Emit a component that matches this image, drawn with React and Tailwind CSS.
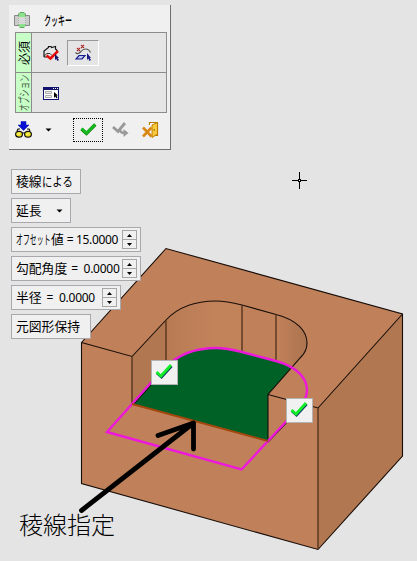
import React from "react";

// Text squeezed horizontally, as the narrow kana of the UI face
function Squeeze({ children, width, scale, className = "" }) {
  return (
    <span className={`inline-block whitespace-nowrap ${width}`}>
      <span className={`inline-block origin-left ${scale} ${className}`}>{children}</span>
    </span>
  );
}

function Model() {
  return (
    <svg className="absolute inset-0" width="417" height="561" viewBox="0 0 417 561" fill="none">
      <defs>
        <linearGradient id="leftBend" x1="165" x2="216" y1="0" y2="0" gradientUnits="userSpaceOnUse">
          <stop offset="0" stopColor="#b67a53" />
          <stop offset="0.6" stopColor="#be8059" />
          <stop offset="1" stopColor="#c2825a" />
        </linearGradient>
        <linearGradient id="rightBend" x1="276" x2="307" y1="0" y2="0" gradientUnits="userSpaceOnUse">
          <stop offset="0" stopColor="#c2825a" />
          <stop offset="1" stopColor="#aa734f" />
        </linearGradient>
      </defs>
      <path d="M81.5 342.5L166 248.5L402.5 314V456L318 549.5L81.5 483.5Z" fill="#c0815a" />
      <path d="M318 408L402.5 314V456L318 549.5Z" fill="#b17750" />
      <path d="M132 356.5L166 320V367L132 404Z" fill="#b17750" />
      <path d="M166 320C179 306 197 301 216 301C226 301 234 303 242 305V352C216 344 186 346 166 367Z" fill="url(#leftBend)" />
      <path d="M276 314.5C298 320 307 332 307 343C307 349 305 353 301 357L291 368L276 361Z" fill="url(#rightBend)" />
      <path d="M132 404L166 367C180 353 197 348 216 348C226 348 234 350 242 352L276 361Q285 364 291.500 367.500L268 394.500V441Z" fill="#006127" />
      <g stroke="#170d08" strokeWidth="1.1">
        <path d="M81.500 342.500L166 248.500L402.500 314V456L318 549.500L81.500 483.500ZM81.500 342.500L132 356.500L166 320C179 306 197 301 216 301C226 301 234 303 242 305L276 314.500C298 320 307 332 307 343C307 349 305 353 301 357L268 394.500L318 408L402.500 314M268 394.500V441" />
        <path d="M132 356.500V404M166 320V367M242 305V352M276 314.500V361M318 408V549" stroke="#56351f" strokeWidth="1.4" />
        <path d="M133 405L152 384M268 442L288 421" />
      </g>
      <path d="M152 381.500L107 432L241.500 469.500L288 419.500M166 367C180 353 197 348 216 348C226 348 234 350 242 352L276 361C298 367 307 379 307 390Q307 396 304.500 400" stroke="#ee18dc" strokeWidth="2.4" />
      <path d="M132 404L268 441" stroke="#a3470d" strokeWidth="2" />
      <path d="M81.500 510.500L193.500 423M158 435.500L193.500 423L193.500 449" stroke="#000" strokeWidth="4.800" strokeLinecap="round" strokeLinejoin="round" />
      <path d="M292 180.500H307M299.500 172V189" stroke="#000" />
      <rect x="298" y="179" width="3" height="3" fill="#000" />
      <rect x="299" y="180" width="1" height="1" fill="#fff" />
    </svg>
  );
}

function CookieIcon() {
  return (
    <svg width="16" height="18" viewBox="0 0 16 18">
      <path d="M4.500 6V3L6 1.500H10L11.500 3V6M4.500 12V14L6 16.500H10L11.500 14V12" fill="#8be28b" stroke="#62a868" />
      <path d="M.5 4.500H15.500V14.500H.5Z" fill="#cbcbcb" stroke="#888" />
      <path d="M5 3H11V7H5ZM5 12H11V16H5Z" fill="#8be28b" />
      <rect x="4" y="6" width="8" height="7" fill="#d8d8d8" />
      <path d="M4.500 5V14M11.500 5V14" stroke="#9ab59a" strokeDasharray="1 1" />
    </svg>
  );
}

function RegionIcon() {
  return (
    <svg width="17" height="17" viewBox="0 0 17 17" fill="none">
      <path d="M1 12V6L5.500 2.500V1.500H8L8.500 2.500L12.500 1.500V4L14.500 6" fill="#e5e5e5" stroke="#151515" strokeWidth="1.200" />
      <path d="M1 11L4 8.500L7 8.500L9 10.500" stroke="#333" />
      <path d="M1 12H4" stroke="#151515" />
      <path d="M3.500 10.500L7.500 13.500L15 6" stroke="#e60b0b" strokeWidth="2.500" />
      <path d="M12 9V15L13.300 14L14.500 16L16 15L14.500 13H16Z" fill="#16166e" />
    </svg>
  );
}

function CurveIcon() {
  return (
    <svg width="17" height="18" viewBox="0 0 17 18" fill="none">
      <path d="M2 4L5 7M5 4L2 7M6 1L9 4M9 1L6 4" stroke="#ac2929" strokeWidth="1.100" />
      <path d="M.5 8.500Q3 11 6 7.500Q8 5 10.500 5Q14 5 15.500 8.500" stroke="#555" strokeWidth="1.200" />
      <path d="M4 11.500H10L7 15H1Z" fill="#b9c8ee" stroke="#18188d" strokeWidth="1.200" />
      <path d="M12 9V16L13.300 14.500L14.500 17L16 16L14.700 14H16Z" fill="#171786" />
    </svg>
  );
}

function DialogIcon() {
  return (
    <svg width="16" height="13" viewBox="0 0 16 13">
      <rect x=".5" y=".5" width="15" height="12" fill="#fff" stroke="#11116e" />
      <path d="M0 0H16V3H0Z" fill="#11116e" />
      <path d="M10 1H11V2H10ZM12 1H13V2H12ZM14 1H15V2H14Z" fill="#fff" />
      <path d="M2.500 4.500H8.500V6.500H2.500ZM2.500 8.500H8.500V10.500H2.500Z" fill="#eee" stroke="#aaa" />
      <path d="M11 5V11L12.300 9.500L13.500 11.500L14.500 10.500L13.500 8.500H15Z" fill="#000" />
    </svg>
  );
}

function PreviewIcon() {
  return (
    <svg width="17" height="17" viewBox="0 0 17 17">
      <path d="M6 .5H11V4H14L8.500 9.500L3 4H6Z" fill="#0710d5" stroke="#0710a5" strokeWidth=".5" />
      <path d="M2 10L3 8H5M12 8H14L15 10M7 12H10" fill="none" stroke="#111" strokeWidth="1.200" />
      <ellipse cx="4" cy="13.200" rx="3.400" ry="2.900" fill="#f1e529" stroke="#111" strokeWidth="1.200" />
      <ellipse cx="13" cy="13.200" rx="3.400" ry="2.900" fill="#f1e529" stroke="#111" strokeWidth="1.200" />
      <path d="M2.500 14L5 11.500M11.500 14L14 11.500" stroke="#fff8a0" />
    </svg>
  );
}

function OkIcon() {
  return (
    <svg width="17" height="13" viewBox="0 0 17 13" fill="none">
      <path d="M1.500 6L6.500 10.500L15.300 1.500" stroke="#078b0d" strokeWidth="3.400" />
      <path d="M1.500 5.500L6.500 10L15 1.500" stroke="#19ba21" strokeWidth="2.400" />
    </svg>
  );
}

function ApplyIcon() {
  return (
    <svg width="17" height="15" viewBox="0 0 17 15" fill="none" stroke="#999">
      <path d="M1 5L6 9.500L13 1" strokeWidth="2.800" />
      <path d="M8 7.500Q8 11 13 11" strokeWidth="2.600" />
      <path d="M11.500 7L16.500 11L11.500 15Z" fill="#999" stroke="none" />
    </svg>
  );
}

function ExitIcon() {
  return (
    <svg width="17" height="17" viewBox="0 0 17 17">
      <path d="M7.500 4V1.500H15.500V14.500H9" fill="#fff" stroke="#b77900" strokeWidth="1.200" />
      <path d="M10 4L15.500 1.500V13L10 16.500Z" fill="#f7c93b" stroke="#bd7d00" />
      <path d="M11.500 9H13" stroke="#74550a" />
      <path d="M1 6.500L9.500 15.500M9.500 6.500L1 15.500" fill="none" stroke="#d98817" strokeWidth="2.600" />
    </svg>
  );
}

function DownArrow() {
  return (
    <svg width="7" height="4" viewBox="0 0 7 4" className="shrink-0">
      <path d="M.5 .5H6.500L3.500 3.500Z" fill="#000" />
    </svg>
  );
}

function Confirm({ className }) {
  return (
    <div className={`absolute flex h-[25px] w-[27px] items-center justify-center border border-[#b3b3b3] bg-[#f1f1f1] pr-[2px] pb-[2px] ${className}`}>
      <svg width="18" height="17" viewBox="0 0 18 17" fill="none">
        <path d="M2 10L6.500 14L16.500 3" stroke="#123b64" strokeWidth="3" />
        <path d="M1.500 9L6 13L16 2" stroke="#10ee28" strokeWidth="2.800" />
      </svg>
    </div>
  );
}

function Spinner() {
  return (
    <div className="ml-auto flex h-[19px] w-[15px] shrink-0 flex-col border border-[#a6a6a6] bg-[#f0f0f0]">
      <div className="flex flex-1 items-center justify-center border-b border-[#a6a6a6]">
        <svg width="5" height="3" viewBox="0 0 5 3"><path d="M0 3L2.500 0L5 3Z" fill="#000" /></svg>
      </div>
      <div className="flex flex-1 items-center justify-center">
        <svg width="5" height="3" viewBox="0 0 5 3"><path d="M0 0H5L2.500 3Z" fill="#000" /></svg>
      </div>
    </div>
  );
}

function Field({ width, children }) {
  return (
    <div className={`flex h-[25px] items-center whitespace-pre border border-[#a9a9ad] bg-[#f0f0f0] pr-[3px] pl-1 text-[12.8px] leading-none text-black ${width}`}>
      {children}
    </div>
  );
}

export default function App() {
  return (
    <main className="relative h-[561px] w-[417px] overflow-hidden bg-[#e4e4e4] pt-[5px] pl-[9px] font-['Noto_Sans_CJK_JP',sans-serif]">
      <Model />
      <section className="relative h-[145px] w-[162px] border-r border-b border-[#6e6e6e] bg-[#f0f0f0]">
        <header className="flex h-[27px] items-center pt-[3px] pl-[5px]">
          <CookieIcon />
          <span className="ml-[14px] pb-px text-[13px] leading-none font-medium">
            <Squeeze width="w-[28px]" scale="scale-x-[0.54]">クッキー</Squeeze>
          </span>
        </header>
        <div className="ml-[6px] flex h-[81px] w-[152px] flex-col border border-[#8c8c8c] bg-[#e5e5e5]">
          <div className="flex h-[40px] border-b border-[#8c8c8c]">
            <div className="flex w-4 items-center justify-center border-r border-[#8c8c8c] bg-[#c7ffc7]">
              <span className="-rotate-90 text-[12px] leading-none whitespace-nowrap">必須</span>
            </div>
            <div className="flex flex-1 items-center pt-px pl-[11px]">
              <RegionIcon />
              <div className="ml-[7px] flex h-[26px] w-8 items-center justify-center border border-t-[#999] border-r-white border-b-white border-l-[#999]">
                <CurveIcon />
              </div>
            </div>
          </div>
          <div className="flex flex-1">
            <div className="flex w-4 items-center justify-center border-r border-[#8c8c8c] bg-[#c7ffc7]">
              <span className="-rotate-90 scale-x-[0.61] text-[12px] leading-none whitespace-nowrap text-[#4e664e]">オプション</span>
            </div>
            <div className="flex items-center pt-px pl-[11px]"><DialogIcon /></div>
          </div>
        </div>
        <footer className="flex h-[33px] items-center pl-[6px]">
          <span className="pb-px"><PreviewIcon /></span>
          <span className="ml-[13px] flex"><DownArrow /></span>
          <div className="ml-[21px] flex h-6 w-[30px] items-center justify-center border border-dotted border-black">
            <OkIcon />
          </div>
          <span className="ml-[9px]"><ApplyIcon /></span>
          <span className="ml-[13px]"><ExitIcon /></span>
        </footer>
      </section>
      <section className="relative mt-[19px] ml-[2px] flex flex-col items-start gap-1">
        <Field width="w-[70px]">
          <span>稜線</span>
          <Squeeze width="w-[31px]" scale="scale-x-[0.81]">による</Squeeze>
        </Field>
        <Field width="w-[60px]">
          <span>延長</span><span className="ml-[14px]"><DownArrow /></span>
        </Field>
        <Field width="w-[130px]">
          <Squeeze width="w-[35px]" scale="scale-x-[0.54]">オフセット</Squeeze>
          <span>値</span>
          <span className="ml-[3px] font-['Noto_Sans'] text-[12px] tracking-[-0.35px]">= 15.0000</span>
          <Spinner />
        </Field>
        <Field width="w-[130px]">
          <span>勾配角度</span>
          <span className="ml-1 font-['Noto_Sans'] text-[12px] tracking-[-0.25px]">=  0.0000</span>
          <Spinner />
        </Field>
        <Field width="w-[110px]">
          <span>半径</span>
          <span className="ml-[5px] font-['Noto_Sans'] text-[12px] tracking-[-0.25px]">=  0.0000</span>
          <Spinner />
        </Field>
        <Field width="w-[80px]">元図形保持</Field>
      </section>
      <Confirm className="top-[360px] left-[151px]" />
      <Confirm className="top-[398px] left-[286px]" />
      <p className="absolute top-[512px] left-[19px] text-[24px] leading-none font-light whitespace-nowrap text-black">稜線指定</p>
    </main>
  );
}
